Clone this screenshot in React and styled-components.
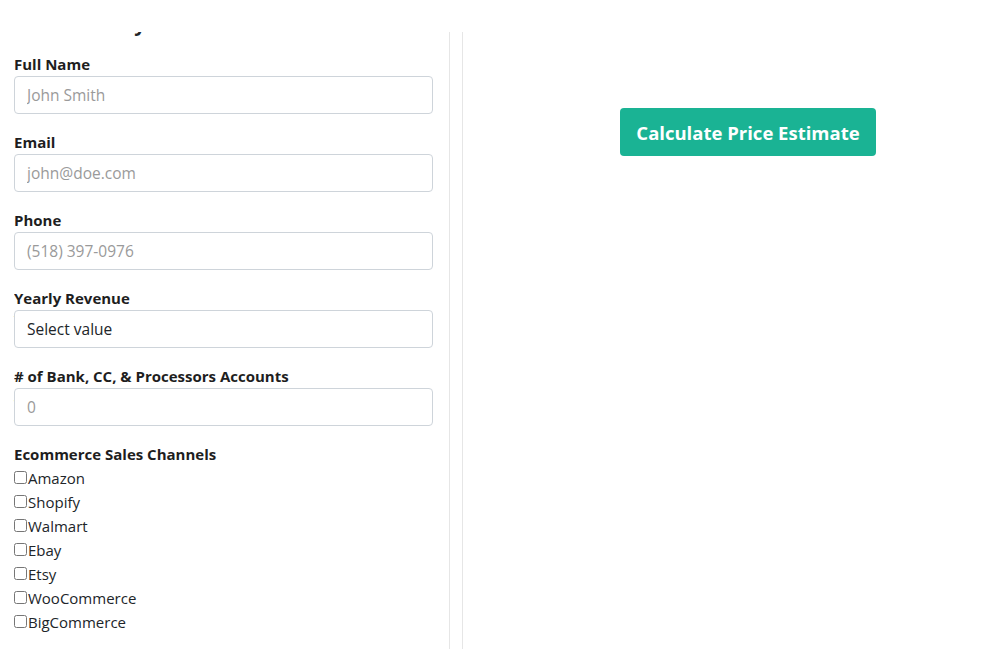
import React, { useEffect, useRef } from 'react';
import styled, { createGlobalStyle } from 'styled-components';

const GlobalStyle = createGlobalStyle`
  body {
    margin: 0;
    background: #fff;
    font-family: "Open Sans", "Noto Sans", sans-serif;
    color: #212529;
  }
  * { box-sizing: border-box; }
`;

const Page = styled.div`
  display: flex;
  height: 649px;
  padding-top: 32px;
  gap: 12px;
`;

const FormPanel = styled.div`
  width: 450px;
  height: 100%;
  overflow: hidden;
  padding: 0 16px 0 14px;
  border-right: 1px solid #e6e6e6;
`;

const ResultPanel = styled.div`
  flex: 1;
  display: flex;
  justify-content: center;
  align-items: flex-start;
  padding: 76px 0 0 33px;
  border-left: 1px solid #e6e6e6;
`;

const Heading = styled.h2`
  margin: 0 0 15px;
  font-size: 20px;
  line-height: 28px;
  font-weight: 700;
`;

const Field = styled.div`
  margin-bottom: 17px;
`;

const Label = styled.label`
  display: block;
  font-size: 15px;
  line-height: 22px;
  font-weight: 700;
  margin-bottom: 1px;
  color: #1e1e1e;
`;

const Input = styled.input`
  display: block;
  width: 100%;
  height: 38px;
  padding: 0 12px;
  font: inherit;
  font-size: 15.5px;
  color: #212529;
  border: 1px solid #ced4da;
  border-radius: 4px;
  outline: none;
  &::placeholder { color: #9a9a9a; }
`;

const Select = styled.select`
  display: block;
  width: 100%;
  height: 38px;
  padding: 0 12px;
  font: inherit;
  font-size: 15.5px;
  color: #212529;
  background: #fff;
  border: 1px solid #ced4da;
  border-radius: 4px;
  appearance: none;
  outline: none;
`;

const CheckRow = styled.label`
  display: flex;
  align-items: center;
  height: 24px;
  font-size: 15px;
  color: #212529;
`;

const Box = styled.input`
  width: 13px;
  height: 13px;
  margin: 0 1px 2px 0;
`;

const EstimateButton = styled.button`
  height: 48px;
  padding: 0 16px;
  border: none;
  border-radius: 4px;
  background: #1ab394;
  color: #fff;
  font-family: inherit;
  font-size: 18.5px;
  font-weight: 700;
  cursor: pointer;
`;

const fields = [
  { label: 'Full Name', placeholder: 'John Smith', type: 'text' },
  { label: 'Email', placeholder: 'john@doe.com', type: 'email' },
  { label: 'Phone', placeholder: '(518) 397-0976', type: 'tel' },
];

const channels = ['Amazon', 'Shopify', 'Walmart', 'Ebay', 'Etsy', 'WooCommerce', 'BigCommerce'];

export default function App() {
  const panelRef = useRef(null);

  useEffect(() => {
    // the form was scrolled a little past its heading
    if (panelRef.current) panelRef.current.scrollTop = 22;
  }, []);

  return (
    <>
      <GlobalStyle />
      <Page>
        <FormPanel ref={panelRef}>
          <Heading>Client Survey</Heading>
          {fields.map(f => (
            <Field key={f.label}>
              <Label>{f.label}</Label>
              <Input type={f.type} placeholder={f.placeholder} />
            </Field>
          ))}
          <Field>
            <Label>Yearly Revenue</Label>
            <Select defaultValue="">
              <option value="">Select value</option>
              <option>Under $500K</option>
              <option>$500K - $1M</option>
              <option>$1M - $5M</option>
              <option>Over $5M</option>
            </Select>
          </Field>
          <Field>
            <Label># of Bank, CC, &amp; Processors Accounts</Label>
            <Input type="number" placeholder="0" />
          </Field>
          <Field>
            <Label>Ecommerce Sales Channels</Label>
            {channels.map(c => (
              <CheckRow key={c}>
                <Box type="checkbox" />
                {c}
              </CheckRow>
            ))}
          </Field>
        </FormPanel>
        <ResultPanel>
          <EstimateButton>Calculate Price Estimate</EstimateButton>
        </ResultPanel>
      </Page>
    </>
  );
}
